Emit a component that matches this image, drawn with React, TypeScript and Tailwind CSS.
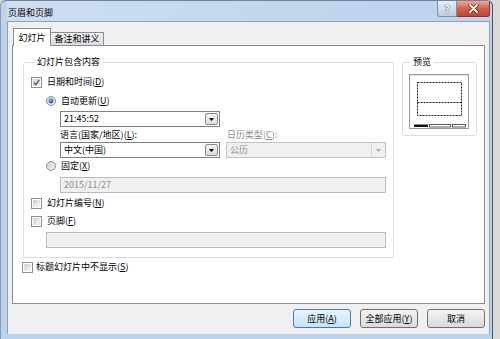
import type { ReactNode } from 'react';

const font = "font-['Noto_Sans_CJK_SC','Noto_Sans',sans-serif]";

function Check({ checked = false }: { checked?: boolean }) {
  return (
    <span className="flex h-[11px] w-[11px] flex-none border border-[#8e8f8f] bg-white p-px">
      <span className="flex h-full w-full items-center justify-center bg-linear-to-br from-[#cdd1d7] to-[#f6f6f6]">
        {checked && (
          <svg width="7" height="7" viewBox="0 0 7 7">
            <path d="M0.8 3.4 L2.8 5.8 L6.3 0.8" fill="none" stroke="#4a5e8a" strokeWidth="1.4" />
          </svg>
        )}
      </span>
    </span>
  );
}

function Radio({ checked = false, id }: { checked?: boolean; id: string }) {
  return (
    <svg width="10" height="10" viewBox="0 0 10 10" className="flex-none">
      <defs>
        <linearGradient id={`rg-${id}`} x1="0" y1="0" x2="1" y2="1">
          <stop offset="0" stopColor="#c9ccd2" />
          <stop offset="1" stopColor="#f7f7f7" />
        </linearGradient>
        <radialGradient id={`rd-${id}`} cx="0.4" cy="0.35" r="0.7">
          <stop offset="0" stopColor="#8fd0f7" />
          <stop offset="0.5" stopColor="#2b78c8" />
          <stop offset="1" stopColor="#1b4f8d" />
        </radialGradient>
      </defs>
      <circle cx="5" cy="5" r="4.5" fill={`url(#rg-${id})`} stroke="#8e8f8f" />
      {checked && <circle cx="5" cy="5" r="2.4" fill={`url(#rd-${id})`} />}
    </svg>
  );
}

function Arrow({ color = '#000' }: { color?: string }) {
  return (
    <svg width="5" height="3" viewBox="0 0 5 3">
      <polygon points="0,0 5,0 2.5,3" fill={color} />
    </svg>
  );
}

function Combo({ value, disabled = false }: { value: string; disabled?: boolean }) {
  return (
    <div
      className={`flex h-[16px] w-[160px] items-center border ${
        disabled ? 'border-[#c2c4c7] bg-[#f0f0f0] text-[#8d8d8d]' : 'border-[#7c8088] bg-white text-black'
      }`}
    >
      <span className="flex-1 pl-[3px] leading-[12px]">{value}</span>
      {disabled ? (
        <span className="flex h-full w-[14px] items-center justify-center border-l border-[#d5d5d5]">
          <Arrow color="#a8a8a8" />
        </span>
      ) : (
        <span className="mr-px flex h-[12px] w-[13px] items-center justify-center rounded-[2px] border border-[#8a8a8a] bg-linear-to-b from-[#f4f4f4] to-[#dcdcdc]">
          <Arrow />
        </span>
      )}
    </div>
  );
}

function TextBox({ value = '', width }: { value?: string; width: string }) {
  return (
    <div className={`flex h-[16px] items-center border border-[#b8babd] bg-[#f0f0f0] pl-[3px] leading-[12px] text-[#8d8d8d] ${width}`}>
      {value}
    </div>
  );
}

function Key({ k }: { k: string }) {
  return (
    <>
      (<u>{k}</u>)
    </>
  );
}

function Row({ children, className = '' }: { children: ReactNode; className?: string }) {
  return <div className={`flex h-[14px] items-center leading-[12px] ${className}`}>{children}</div>;
}

function Btn({ children, primary = false }: { children: ReactNode; primary?: boolean }) {
  return (
    <button
      className={`flex h-[19px] w-[58px] items-center justify-center rounded-[3px] border leading-[12px] ${
        primary
          ? 'border-[#3c7fb1] bg-linear-to-b from-[#e9f5fd] to-[#c4e3fb]'
          : 'border-[#707070] bg-linear-to-b from-[#f4f4f4] to-[#dadada]'
      }`}
    >
      {children}
    </button>
  );
}

export default function App() {
  return (
    <div className={`flex h-[339px] w-[500px] bg-[#d9d9d9] text-[9px] text-black ${font}`}>
      <div className="flex h-full w-[493px] flex-col rounded-t-[6px] border-l border-r border-t border-l-[#8a9bb0] border-r-[#4a525c] border-t-[#6f8299] bg-[#bcd3ec] pl-[6px] pr-[2px]">
        {/* title bar */}
        <div className="flex h-[20px] items-start bg-linear-to-r from-[#cfdff2] via-[#c3d7ee] to-[#bdd3ec]">
          <span className="ml-px mt-[6px] leading-[12px]">页眉和页脚</span>
          <div className="ml-auto flex">
            <div className="flex h-[16px] w-[20px] items-center justify-center rounded-bl-[3px] border border-t-0 border-[#7d8ea3] bg-linear-to-b from-[#e6eef7] to-[#bccee3] text-[10px] font-bold text-white [text-shadow:0_0_1px_#3a4656,0_0_1px_#3a4656]">
              ?
            </div>
            <div className="flex h-[16px] w-[33px] items-center justify-center rounded-br-[3px] border border-l-0 border-t-0 border-[#7a3a33] bg-linear-to-b from-[#e9a99c] via-[#d3614f] to-[#c24533]">
              <svg width="11" height="9" viewBox="0 0 11 9">
                <path d="M2 1 L9 8 M9 1 L2 8" stroke="#5a231b" strokeWidth="3.2" strokeLinecap="round" />
                <path d="M2 1 L9 8 M9 1 L2 8" stroke="#ffffff" strokeWidth="1.8" strokeLinecap="round" />
              </svg>
            </div>
          </div>
        </div>

        {/* client */}
        <div className="flex h-[313px] flex-col border border-b-0 border-[#8fa1b5] bg-[#f0f0f0] px-[4px] pt-[6px]">
          {/* tabs */}
          <div className="flex h-[17px] items-end">
            <div className="relative z-10 -mb-px ml-px flex h-[18px] w-[38px] items-center justify-center border border-b-0 border-[#898c95] bg-white leading-[12px]">
              幻灯片
            </div>
            <div className="flex h-[13px] w-[53px] items-center justify-center border border-b-0 border-l-0 border-[#898c95] bg-linear-to-b from-[#f2f2f2] to-[#dbdbdb] leading-[12px]">
              备注和讲义
            </div>
          </div>

          {/* panel */}
          <div className="flex h-[259px] flex-col border border-[#898c95] bg-white pl-[10px] pt-[10px]">
            <div className="flex items-start">
              <fieldset className="w-[371px] rounded-[3px] border border-[#d5dfe5] pb-[9px] pl-[7px] pt-[7px]">
                <legend className="ml-[3px] px-[3px] leading-[12px]">幻灯片包含内容</legend>
                <Row>
                  <Check checked />
                  <span className="ml-[5px]">
                    日期和时间<Key k="D" />
                  </span>
                </Row>
                <Row className="ml-[15px] mt-[5px]">
                  <Radio checked id="a" />
                  <span className="ml-[5px]">
                    自动更新<Key k="U" />
                  </span>
                </Row>
                <div className="ml-[29px] mt-[3px]">
                  <Combo value="21:45:52" />
                  <div className="mt-[2px] flex h-[12px] leading-[12px]">
                    <span className="w-[167px]">
                      语言(国家/地区)<Key k="L" />:
                    </span>
                    <span className="text-[#8d8d8d]">
                      日历类型<Key k="C" />:
                    </span>
                  </div>
                  <div className="mt-px flex gap-[6px]">
                    <Combo value="中文(中国)" />
                    <Combo value="公历" disabled />
                  </div>
                </div>
                <Row className="ml-[15px] mt-px">
                  <Radio id="b" />
                  <span className="ml-[5px]">
                    固定<Key k="X" />
                  </span>
                </Row>
                <div className="ml-[29px] mt-[4px]">
                  <TextBox value="2015/11/27" width="w-[326px]" />
                </div>
                <Row className="mt-[3px]">
                  <Check />
                  <span className="ml-[5px]">
                    幻灯片编号<Key k="N" />
                  </span>
                </Row>
                <Row className="mt-[4px]">
                  <Check />
                  <span className="ml-[5px]">
                    页脚<Key k="F" />
                  </span>
                </Row>
                <div className="ml-[15px] mt-[4px]">
                  <TextBox width="w-[340px]" />
                </div>
              </fieldset>

              <fieldset className="ml-[8px] w-[75px] rounded-[3px] border border-[#d5dfe5] pb-[6px] pl-[6px] pt-[6px]">
                <legend className="ml-px px-[3px] leading-[12px]">预览</legend>
                <svg width="60" height="55" viewBox="0 0 60 55">
                  <rect x="0.5" y="0.5" width="59" height="54" fill="#fff" stroke="#9a9a9a" />
                  <line x1="1" y1="1.5" x2="59" y2="1.5" stroke="#e2e2e2" />
                  <rect x="8.5" y="8.5" width="44" height="33" fill="none" stroke="#222" strokeDasharray="2 1" />
                  <line x1="8.5" y1="28.5" x2="52.5" y2="28.5" stroke="#222" strokeDasharray="2 1" />
                  <rect x="5" y="50.5" width="14" height="2.5" fill="#111" />
                  <rect x="20.5" y="50.5" width="21" height="2.5" fill="none" stroke="#333" strokeWidth="0.8" />
                  <rect x="43.5" y="50.5" width="13" height="2.5" fill="none" stroke="#333" strokeWidth="0.8" />
                </svg>
              </fieldset>
            </div>

            <Row className="-ml-px mt-[2px]">
              <Check />
              <span className="ml-[3px]">
                标题幻灯片中不显示<Key k="S" />
              </span>
            </Row>
          </div>

          {/* buttons */}
          <div className="mt-[5px] flex justify-end gap-[9px]">
            <Btn primary>
              应用<Key k="A" />
            </Btn>
            <Btn>
              全部应用<Key k="Y" />
            </Btn>
            <Btn>取消</Btn>
          </div>
        </div>
      </div>
    </div>
  );
}
